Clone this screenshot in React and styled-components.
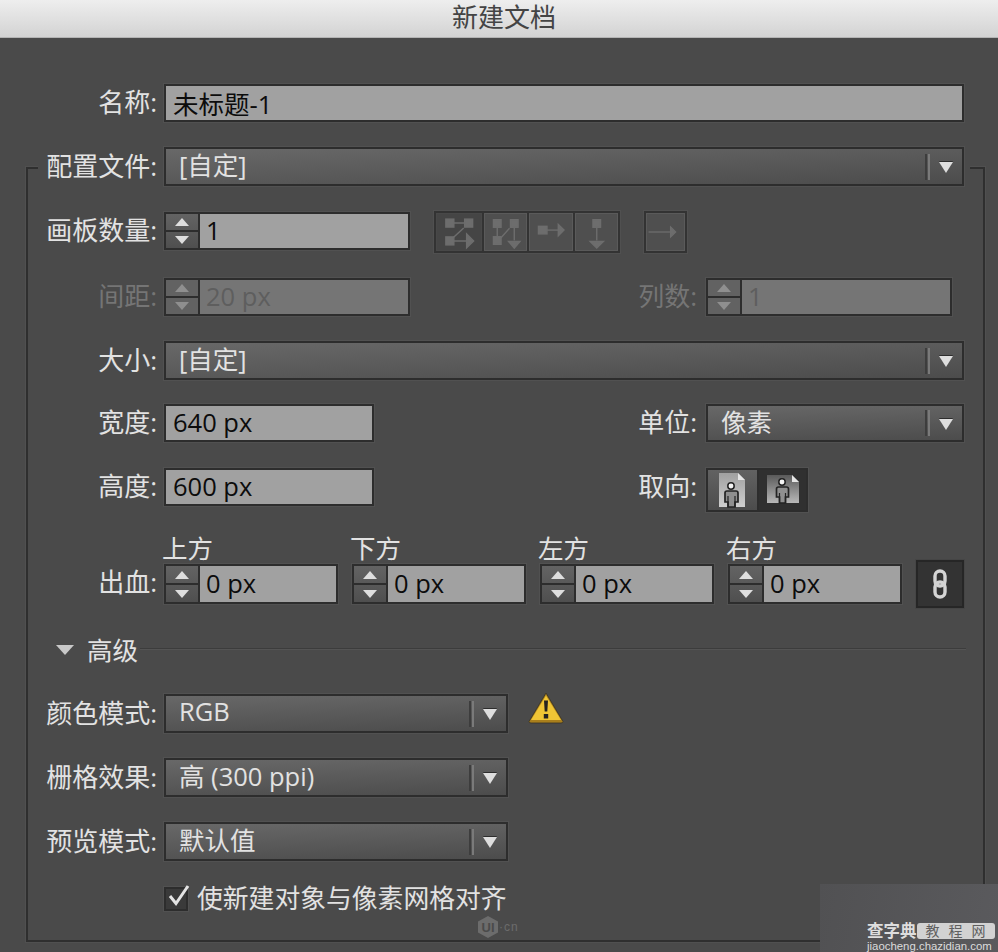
import styled, { createGlobalStyle } from "styled-components"

const GlobalStyle = createGlobalStyle`
    html, body {
        margin: 0;
        padding: 0;
        background: #4a4a4a;
    }
    * {
        box-sizing: border-box;
    }
`

const FONT = `"Open Sans", "Noto Sans CJK SC", sans-serif`

function Stepper({ value, width, disabled }) {
    return (
        <StepBox $width={width} $disabled={disabled}>
            <Spin $disabled={disabled}>
                <SpinBtn><ArrowUp $disabled={disabled} /></SpinBtn>
                <SpinBtn><ArrowDown $disabled={disabled} /></SpinBtn>
            </Spin>
            <StepValue $disabled={disabled}>{value}</StepValue>
        </StepBox>
    )
}

function Select({ value, width }) {
    return (
        <SelectBox $width={width}>
            <SelectValue>{value}</SelectValue>
            <SelectDivider />
            <Caret />
        </SelectBox>
    )
}

function ModeIcon({ children }) {
    return (
        <svg width="46" height="42" viewBox="0 0 46 42" fill="#6d6d6d" stroke="#6d6d6d" strokeWidth="1.5">
            {children}
        </svg>
    )
}

function PersonPage({ landscape, dark }) {
    const top = landscape ? 6 : 4
    const bottom = landscape ? 34 : 38
    const left = landscape ? 6 : 8
    const right = landscape ? 38 : 34
    const id = dark ? "pageDark" : "pageLight"
    return (
        <svg width="44" height="42" viewBox="0 0 44 42">
            <defs>
                <linearGradient id={id} x1="0" y1="0" x2="0" y2="1">
                    <stop offset="0" stopColor={dark ? "#5a5a5a" : "#a0a0a0"} />
                    <stop offset="1" stopColor={dark ? "#b8b8b8" : "#cfcfcf"} />
                </linearGradient>
            </defs>
            <path d={`M${left} ${top}H${right - 7}L${right} ${top + 7}V${bottom}H${left}Z`} fill={`url(#${id})`} />
            <path d={`M${right - 7} ${top}L${right} ${top + 7}H${right - 7}Z`} fill="#e6e6e6" />
            <circle cx={(left + right) / 2 - 1} cy={landscape ? 13 : 17} r="3.2" fill="#f4f4f4" stroke="#222" strokeWidth="1.5" />
            <path
                d={landscape
                    ? "M15.5 28V20a2 2 0 0 1 2-2h8a2 2 0 0 1 2 2v8h-3v6h-6v-6Z"
                    : "M14 33V24a2 2 0 0 1 2-2h9a2 2 0 0 1 2 2v9h-3v5h-7v-5Z"}
                fill="#8f8f8f"
                stroke="#232323"
                strokeWidth="1.7"
            />
            <path
                d={landscape ? "M18.5 24V34M24.5 24V34" : "M17 27V38M24 27V38"}
                fill="none"
                stroke="#232323"
                strokeWidth="1.2"
            />
        </svg>
    )
}

export default function App() {
    return (
        <>
            <GlobalStyle />
            <Page>
                <TitleBar>新建文档</TitleBar>
                <Content>
                    <Row $height={38}>
                        <Label>名称:</Label>
                        <TextField $dark>未标题-1</TextField>
                    </Row>

                    <Group>
                        <CoverRow $height={39}>
                            <Label $width={119}>配置文件:</Label>
                            <Select value="[自定]" />
                        </CoverRow>

                        <Row $top={26} $height={38}>
                            <Label>画板数量:</Label>
                            <Stepper value="1" width={246} />
                            <ToolGroup>
                                <ToolBtn $first>
                                    <ModeIcon>
                                        <rect x="10" y="8" width="8" height="8" />
                                        <rect x="29" y="8" width="8" height="8" />
                                        <rect x="10" y="26" width="8" height="8" />
                                        <path d="M18 12H29M28 17L17 27M18 30H33" fill="none" />
                                        <path d="M31 23L38 30L31 37Z" />
                                    </ModeIcon>
                                </ToolBtn>
                                <ToolBtn>
                                    <ModeIcon>
                                        <rect x="10" y="8" width="8" height="8" />
                                        <rect x="28" y="8" width="8" height="8" />
                                        <rect x="10" y="26" width="8" height="8" />
                                        <path d="M14 16V26M27 17L18 27M32 16V30" fill="none" />
                                        <path d="M26 31H38L32 38Z" />
                                    </ModeIcon>
                                </ToolBtn>
                                <ToolBtn>
                                    <ModeIcon>
                                        <rect x="10" y="15" width="9" height="8" />
                                        <path d="M19 19H32" fill="none" />
                                        <path d="M31 13L37 19L31 25Z" />
                                    </ModeIcon>
                                </ToolBtn>
                                <ToolBtn>
                                    <ModeIcon>
                                        <rect x="19" y="8" width="8" height="8" />
                                        <path d="M23 16V30" fill="none" />
                                        <path d="M16 31H30L23 38Z" />
                                    </ModeIcon>
                                </ToolBtn>
                            </ToolGroup>
                            <ToolGroup>
                                <ToolBtn $wide>
                                    <ModeIcon>
                                        <path d="M3 21H30" fill="none" />
                                        <path d="M29 15L35 21L29 27Z" />
                                    </ModeIcon>
                                </ToolBtn>
                            </ToolGroup>
                        </Row>

                        <Row $top={28} $height={38}>
                            <Label $disabled>间距:</Label>
                            <LeftCell>
                                <Stepper value="20 px" width={246} disabled />
                            </LeftCell>
                            <RightLabel $disabled>列数:</RightLabel>
                            <Stepper value="1" width={246} disabled />
                        </Row>

                        <Row $top={25} $height={39}>
                            <Label>大小:</Label>
                            <Select value="[自定]" />
                        </Row>

                        <Row $top={24} $height={38}>
                            <Label>宽度:</Label>
                            <LeftCell>
                                <TextField $width={210}>640 px</TextField>
                            </LeftCell>
                            <RightLabel>单位:</RightLabel>
                            <Select value="像素" width={258} />
                        </Row>

                        <Row $top={26} $height={38}>
                            <Label>高度:</Label>
                            <LeftCell>
                                <TextField $width={210}>600 px</TextField>
                            </LeftCell>
                            <RightLabel>取向:</RightLabel>
                            <OrientGroup>
                                <OrientBtn><PersonPage /></OrientBtn>
                                <OrientBtn $active><PersonPage landscape dark /></OrientBtn>
                            </OrientGroup>
                        </Row>

                        <BleedRow>
                            <Label>出血:</Label>
                            <BleedFields>
                                {["上方", "下方", "左方", "右方"].map((side) => (
                                    <BleedCell key={side}>
                                        <BleedCaption>{side}</BleedCaption>
                                        <Stepper value="0 px" width={174} />
                                    </BleedCell>
                                ))}
                            </BleedFields>
                            <LinkBtn>
                                <svg width="18" height="32" viewBox="0 0 18 32" fill="none" stroke="#d4d4d4" strokeWidth="3.4">
                                    <rect x="4" y="3" width="10" height="15" rx="5" />
                                    <rect x="4" y="14" width="10" height="15" rx="5" />
                                </svg>
                            </LinkBtn>
                        </BleedRow>

                        <AdvancedRow>
                            <AdvancedCaret />
                            <AdvancedText>高级</AdvancedText>
                            <AdvancedLine />
                        </AdvancedRow>

                        <Row $top={28} $height={39}>
                            <Label>颜色模式:</Label>
                            <Select value="RGB" width={344} />
                            <WarnIcon>
                                <svg width="36" height="32" viewBox="0 0 36 32">
                                    <path d="M18 1L35 29.5Q35 31 33 31H3Q1 31 1 29.5Z" fill="#a97f1c" stroke="#353126" strokeWidth="0.8" />
                                    <path d="M18 3.5L33 28H3Z" fill="#f0c535" />
                                    <path d="M16 8.5h4l-.7 11h-2.6Z M15.8 22h4.4v4.4h-4.4Z" fill="#262320" />
                                </svg>
                            </WarnIcon>
                        </Row>

                        <Row $top={25} $height={39}>
                            <Label>栅格效果:</Label>
                            <Select value="高 (300 ppi)" width={344} />
                        </Row>

                        <Row $top={25} $height={39}>
                            <Label>预览模式:</Label>
                            <Select value="默认值" width={344} />
                        </Row>

                        <CheckRow>
                            <CheckBox>
                                <svg width="26" height="26" viewBox="0 0 26 26" fill="none" stroke="#e4e4e4" strokeWidth="3">
                                    <path d="M5 12L11 19.5L23 2" />
                                </svg>
                            </CheckBox>
                            <CheckText>使新建对象与像素网格对齐</CheckText>
                        </CheckRow>
                    </Group>
                </Content>

                <UiMark>
                    <svg width="20" height="22" viewBox="0 0 20 22">
                        <path d="M10 0L20 5.5V16.5L10 22L0 16.5V5.5Z" fill="#6c6c6c" />
                        <text x="10" y="16" textAnchor="middle" fontSize="13" fontWeight="700" fontFamily="Liberation Sans" fill="#4a4a4a">UI</text>
                    </svg>
                    <UiMarkText>·cn</UiMarkText>
                </UiMark>

                <Stamp>
                    <StampTop>
                        <StampName>查字典</StampName>
                        <StampBadge>教程网</StampBadge>
                    </StampTop>
                    <StampUrl>jiaocheng.chazidian.com</StampUrl>
                </Stamp>
            </Page>
        </>
    )
}

const Page = styled.div`
    position: relative;
    width: 998px;
    height: 952px;
    overflow: hidden;
    background: #4a4a4a;
    font-family: ${FONT};
    font-size: 25.5px;
    color: #e2e2e2;
`
const TitleBar = styled.div`
    height: 38px;
    display: flex;
    align-items: center;
    justify-content: center;
    padding: 0 0 6px 10px;
    background: linear-gradient(#eeeeee, #d3d3d3);
    border-bottom: 1px solid #b4b4b4;
    color: #444444;
    font-size: 26px;
`
const Content = styled.div`
    padding: 46px 15px 0 28px;
`
const Row = styled.div`
    display: flex;
    align-items: stretch;
    height: ${(p) => p.$height}px;
    margin-top: ${(p) => p.$top || 0}px;
    padding-right: 19px;
`
const CoverRow = styled(Row)`
    margin: -22px 13px 0 10px;
    padding-right: 6px;
    background: #4a4a4a;
`
const Group = styled.div`
    margin: 45px -2px 0;
    height: 775px;
    border: 2px solid #2f2f2f;
    box-shadow: 0 0 0 1px #505050;
`
const Label = styled.div`
    flex: 0 0 ${(p) => p.$width || 129}px;
    margin-right: 7px;
    padding-bottom: 4px;
    display: flex;
    align-items: center;
    justify-content: flex-end;
    font-size: 26px;
    white-space: nowrap;
    color: ${(p) => (p.$disabled ? "#757575" : "#e2e2e2")};
`
const LeftCell = styled.div`
    flex: 0 0 473px;
    display: flex;
`
const RightLabel = styled(Label)`
    flex-basis: 60px;
    margin-right: 9px;
`
const TextField = styled.div`
    flex: ${(p) => (p.$width ? `0 0 ${p.$width}px` : 1)};
    display: flex;
    align-items: center;
    padding: 0 0 2px 7px;
    background: #a1a1a1;
    border: 2px solid #2d2d2d;
    box-shadow: 0 0 0 1px #515151;
    color: #0c0c0c;
`
const StepBox = styled.div`
    flex: 0 0 ${(p) => p.$width}px;
    display: flex;
    background: ${(p) => (p.$disabled ? "#757575" : "#a1a1a1")};
    border: 2px solid #2d2d2d;
    box-shadow: 0 0 0 1px #515151;
`
const Spin = styled.div`
    flex: 0 0 34px;
    display: flex;
    flex-direction: column;
    background: ${(p) => (p.$disabled ? "#626262" : "linear-gradient(#636363, #4f4f4f)")};
    border-right: 2px solid #2d2d2d;
`
const SpinBtn = styled.div`
    flex: 1;
    display: flex;
    align-items: center;
    justify-content: center;
    & + & {
        border-top: 2px solid #2d2d2d;
    }
`
const ArrowUp = styled.div`
    width: 0;
    height: 0;
    border-left: 7px solid transparent;
    border-right: 7px solid transparent;
    border-bottom: 8px solid ${(p) => (p.$disabled ? "#8f8f8f" : "#dedede")};
`
const ArrowDown = styled.div`
    width: 0;
    height: 0;
    border-left: 7px solid transparent;
    border-right: 7px solid transparent;
    border-top: 8px solid ${(p) => (p.$disabled ? "#8f8f8f" : "#dedede")};
`
const StepValue = styled.div`
    flex: 1;
    display: flex;
    align-items: center;
    padding: 0 0 2px 6px;
    white-space: nowrap;
    color: ${(p) => (p.$disabled ? "#5e5e5e" : "#0c0c0c")};
`
const SelectBox = styled.div`
    flex: ${(p) => (p.$width ? `0 0 ${p.$width}px` : 1)};
    display: flex;
    align-items: center;
    background: linear-gradient(178deg, #686868, #4c4c4c);
    border: 2px solid #2d2d2d;
    box-shadow: 0 0 0 1px #515151;
`
const SelectValue = styled.div`
    flex: 1;
    padding: 0 0 6px 13px;
    white-space: nowrap;
`
const SelectDivider = styled.div`
    width: 5px;
    height: 26px;
    margin-right: 9px;
    border-left: 2px solid #3d3d3d;
    border-right: 2px solid #7a7a7a;
`
const Caret = styled.div`
    width: 0;
    height: 0;
    margin: 2px 9px 0 0;
    border-left: 7px solid transparent;
    border-right: 7px solid transparent;
    border-top: 11px solid #dedede;
    filter: drop-shadow(0 -1px 0 #2d2d2d);
`
const ToolGroup = styled.div`
    display: flex;
    align-self: flex-start;
    height: 42px;
    margin: -1px 0 0 24px;
    border: 2px solid #333333;
    box-shadow: 0 0 0 1px #505050;
`
const ToolBtn = styled.div`
    width: ${(p) => (p.$wide ? 39 : 45.5)}px;
    display: flex;
    align-items: center;
    justify-content: center;
    overflow: hidden;
    background: ${(p) => (p.$first ? "#454545" : "#4f4f4f")};
    box-shadow: inset 0 0 0 1px ${(p) => (p.$first ? "#484848" : "#5a5a5a")};
    & + & {
        border-left: 2px solid #333333;
    }
`
const OrientGroup = styled.div`
    display: flex;
    align-self: flex-start;
    height: 44px;
    border: 2px solid #2d2d2d;
    box-shadow: 0 0 0 1px #515151;
`
const OrientBtn = styled.div`
    width: 49px;
    display: flex;
    align-items: center;
    justify-content: center;
    background: ${(p) => (p.$active ? "#303030" : "linear-gradient(#626262, #4c4c4c)")};
    & + & {
        border-left: 2px solid #2d2d2d;
    }
`
const BleedRow = styled(Row)`
    margin-top: 30px;
    height: 66px;
    align-items: flex-end;
    & > :first-child {
        height: 38px;
    }
`
const BleedFields = styled.div`
    display: flex;
    gap: 14px;
`
const BleedCell = styled.div`
    display: flex;
    flex-direction: column;
    width: 174px;
    height: 66px;
    & > :last-child {
        flex: 0 0 38px;
    }
`
const BleedCaption = styled.div`
    flex: 0 0 28px;
    line-height: 24px;
    white-space: nowrap;
    margin-left: -2px;
`
const LinkBtn = styled.div`
    width: 48px;
    height: 48px;
    margin: 0 0 -6px 14px;
    display: flex;
    align-items: center;
    justify-content: center;
    background: #333333;
    border: 2px solid #262626;
    box-shadow: 0 0 0 1px #454545;
`
const AdvancedRow = styled.div`
    display: flex;
    align-items: center;
    height: 30px;
    margin-top: 34px;
    padding: 0 17px 0 28px;
`
const AdvancedCaret = styled.div`
    width: 0;
    height: 0;
    margin: -2px 13px 0 0;
    border-left: 9px solid transparent;
    border-right: 9px solid transparent;
    border-top: 10px solid #c8c8c8;
`
const AdvancedText = styled.div`
    margin-right: 2px;
    padding-bottom: 6px;
    white-space: nowrap;
`
const AdvancedLine = styled.div`
    flex: 1;
    height: 2px;
    margin-top: -4px;
    background: #3c3c3c;
    border-bottom: 1px solid #545454;
`
const WarnIcon = styled.div`
    align-self: flex-start;
    margin: -2px 0 0 20px;
    display: flex;
`
const CheckRow = styled.div`
    display: flex;
    align-items: center;
    height: 27px;
    margin-top: 24px;
    padding-left: 136px;
`
const CheckBox = styled.div`
    position: relative;
    width: 24px;
    height: 24px;
    margin-right: 9px;
    background: #3a3a3a;
    border: 2px solid #2d2d2d;
    box-shadow: 0 0 0 1px #515151;
    & > svg {
        position: absolute;
        left: -1px;
        top: -5px;
    }
`
const CheckText = styled.div`
    padding-bottom: 4px;
    font-size: 25.8px;
    white-space: nowrap;
`
const UiMark = styled.div`
    position: absolute;
    left: 478px;
    top: 916px;
    display: flex;
    align-items: center;
    gap: 1px;
`
const UiMarkText = styled.div`
    font-family: "Liberation Sans", sans-serif;
    font-size: 12px;
    letter-spacing: 1px;
    color: #6c6c6c;
`
const Stamp = styled.div`
    position: absolute;
    right: 0;
    bottom: 0;
    width: 178px;
    height: 68px;
    padding: 38px 11px 0 47px;
    background: linear-gradient(100deg, #515153, #5a5a5d);
`
const StampTop = styled.div`
    display: flex;
    align-items: center;
    height: 17px;
`
const StampName = styled.div`
    width: 53px;
    font-size: 16.5px;
    font-weight: 700;
    line-height: 17px;
    white-space: nowrap;
    color: #dedede;
`
const StampBadge = styled.div`
    flex: 1;
    height: 16px;
    display: flex;
    align-items: center;
    justify-content: center;
    background: #d2d2d2;
    border-radius: 3px;
    font-size: 14px;
    line-height: 16px;
    letter-spacing: 9px;
    padding-left: 9px;
    white-space: nowrap;
    color: #5f5f5f;
`
const StampUrl = styled.div`
    margin-top: 2px;
    font-family: "Liberation Sans", sans-serif;
    font-size: 11.4px;
    line-height: 11px;
    white-space: nowrap;
    color: #dcdcdc;
`
